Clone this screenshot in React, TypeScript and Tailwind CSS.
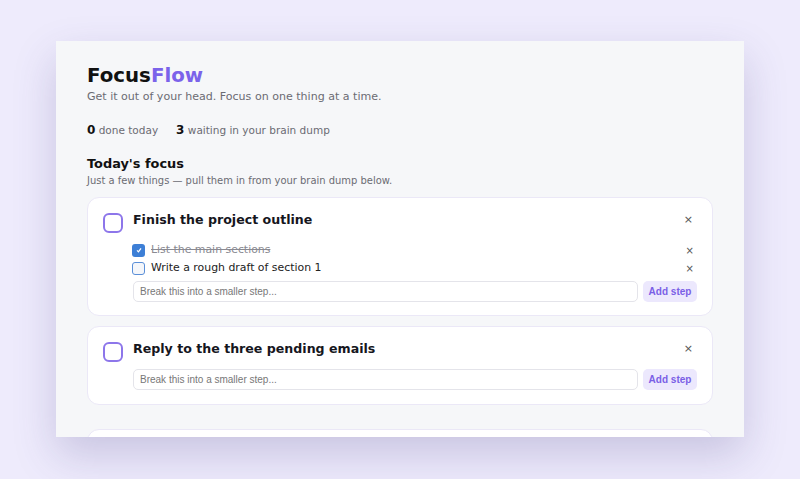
import { useState } from 'react'

interface Step {
  id: number
  text: string
  done: boolean
}

interface Task {
  id: number
  title: string
  steps: Step[]
}

const initialTasks: Task[] = [
  {
    id: 1,
    title: 'Finish the project outline',
    steps: [
      { id: 1, text: 'List the main sections', done: true },
      { id: 2, text: 'Write a rough draft of section 1', done: false }
    ]
  },
  { id: 2, title: 'Reply to the three pending emails', steps: [] }
]

function TaskCard({ task }: { task: Task }) {
  const hasSteps = task.steps.length > 0
  return (
    <div
      className={
        hasSteps
          ? 'rounded-[12px] border border-[#ebe8f7] bg-white px-[15px] pt-[15px] pb-[13px]'
          : 'rounded-[12px] border border-[#ebe8f7] bg-white px-[15px] pt-[15px] pb-[14px]'
      }
    >
      <div className="flex items-start gap-[10px]">
        <div className="h-[20px] w-[20px] shrink-0 rounded-[6px] border-2 border-[#8d76ea] bg-white" />
        <div className="flex-1">
          <div className="flex items-center justify-between">
            <span className="text-[12.6px] font-bold leading-[14px] text-[#16161d]">{task.title}</span>
            <span className="mr-[4px] text-[11px] leading-[14px] text-[#555]">×</span>
          </div>
          {hasSteps && (
            <div className="mt-[16px] flex flex-col gap-[4px]">
              {task.steps.map((s) => (
                <div key={s.id} className="flex h-[14px] items-center">
                  {s.done ? (
                    <div className="-ml-[1px] flex h-[13px] w-[13px] items-center justify-center rounded-[3px] bg-[#3d7fd6]">
                      <svg viewBox="0 0 10 10" className="h-[8px] w-[8px]" fill="none" stroke="white" strokeWidth={1.6}>
                        <path d="M2.5 5.5l1.8 1.8L7.5 3" />
                      </svg>
                    </div>
                  ) : (
                    <div className="-ml-[1px] h-[13px] w-[13px] rounded-[3px] border-[1.5px] border-[#5a8fd8] bg-[#f4f6fa]" />
                  )}
                  <span
                    className={
                      s.done
                        ? 'ml-[6px] flex-1 text-[10.9px] text-[#8a8a92] line-through'
                        : 'ml-[6px] flex-1 text-[10.9px] text-[#222]'
                    }
                  >
                    {s.text}
                  </span>
                  <span className="mr-[3px] text-[10px] text-[#555]">×</span>
                </div>
              ))}
            </div>
          )}
          <div className={hasSteps ? 'mt-[6px] flex gap-[5px]' : 'mt-[13px] flex gap-[5px]'}>
            <input
              placeholder="Break this into a smaller step..."
              className="h-[21px] flex-1 rounded-[5px] border border-[#e4e4ea] bg-white px-[6px] text-[10px] text-[#333] outline-none placeholder:text-[#777]"
              style={{ fontFamily: '"Liberation Sans", Arial, sans-serif' }}
            />
            <button
              className="h-[21px] w-[54px] rounded-[5px] bg-[#ece8fd] text-[10px] font-bold text-[#7a5fe6]"
              style={{ fontFamily: '"Liberation Sans", Arial, sans-serif' }}
            >
              Add step
            </button>
          </div>
        </div>
      </div>
    </div>
  )
}

export default function App() {
  const [tasks] = useState(initialTasks)

  return (
    <div className="h-[479px] w-full overflow-hidden bg-[#eeebfc] pt-[41px]" style={{ fontFamily: '"DejaVu Sans", sans-serif' }}>
      <div className="mx-auto h-[396px] w-[688px] overflow-hidden bg-[#f6f7f9] px-[31px] pt-[22px] shadow-[0_18px_40px_rgba(70,60,130,0.22)]">
        <h1 className="text-[19.8px] font-bold leading-[26px] text-[#111]">
          Focus<span className="text-[#7b63ea]">Flow</span>
        </h1>
        <p className="mt-[1px] text-[11.05px] leading-[14px] text-[#6b6b73]">
          Get it out of your head. Focus on one thing at a time.
        </p>
        <div className="mt-[18px] flex items-baseline gap-[18px] leading-[16px]">
          <span className="text-[10.5px] text-[#6b6b73]">
            <b className="text-[12px] text-[#111]">0</b> done today
          </span>
          <span className="text-[10.5px] text-[#6b6b73]">
            <b className="text-[12px] text-[#111]">3</b> waiting in your brain dump
          </span>
        </div>
        <h2 className="mt-[17px] text-[12.9px] font-bold leading-[18px] text-[#111]">Today's focus</h2>
        <p className="mt-[1px] text-[9.95px] leading-[13px] text-[#6b6b73]">
          Just a few things — pull them in from your brain dump below.
        </p>
        <div className="mt-[10px] flex flex-col gap-[10px]">
          {tasks.map((t) => (
            <TaskCard key={t.id} task={t} />
          ))}
        </div>
        <div className="mt-[24px] h-[60px] rounded-[12px] border border-[#ebe8f7] bg-white" />
      </div>
    </div>
  )
}
